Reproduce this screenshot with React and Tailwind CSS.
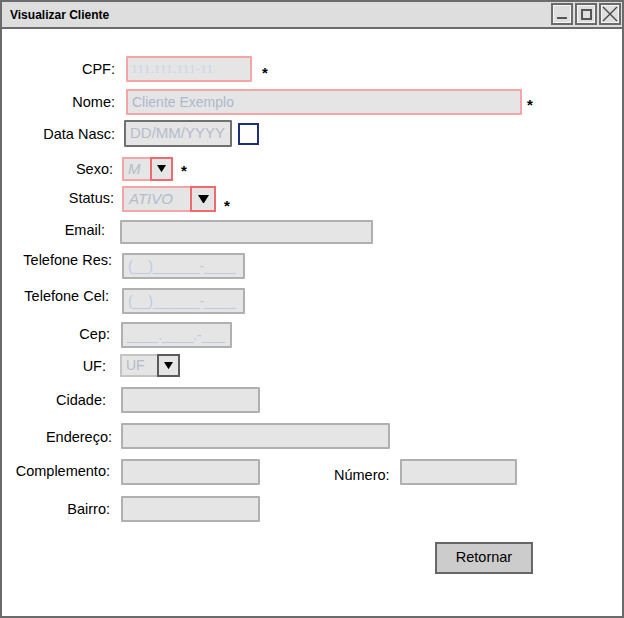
import React from "react";

const Tri = ({ size = 9 }) => (
  <svg width={size} height={size * 0.8} viewBox="0 0 10 8">
    <polygon points="0,0 10,0 5,8" fill="#000" />
  </svg>
);

const Star = ({ cls = "" }) => (
  <span className={"text-[15px] font-bold text-black leading-none " + cls}>*</span>
);

const Ctrl = ({ children }) => (
  <div className="w-[22px] h-[22px] border-2 border-[#6b6b6b] bg-[#dedede] flex items-center justify-center">
    <div className="w-[18px] h-[18px] border border-[#f4f4f4] flex items-center justify-center relative">
      {children}
    </div>
  </div>
);

export default function App() {
  const lbl = "shrink-0 text-right text-[14.5px] text-black leading-[16px]";
  const inp = "shrink-0 bg-[#e5e5e5] border-2 rounded-[1px]";
  return (
    <div className="w-[624px] h-[618px] border-2 border-[#6b6b6b] bg-white flex flex-col [font-family:'Liberation_Sans',Arial,sans-serif] overflow-hidden">
      <div className="h-[27px] shrink-0 bg-[#dedede] border-b-2 border-[#6b6b6b] flex items-center justify-between pl-[8px] pr-[1px]">
        <span className="text-[12px] font-bold text-black">Visualizar Cliente</span>
        <div className="flex gap-[2px] -mt-[1px]">
          <Ctrl>
            <div className="absolute bottom-[3px] left-[3px] w-[10px] h-[2px] bg-[#555]" />
          </Ctrl>
          <Ctrl>
            <div className="w-[11px] h-[11px] border-2 border-[#555]" />
          </Ctrl>
          <Ctrl>
            <svg width="16" height="16" viewBox="0 0 16 16">
              <path d="M1 1 L15 15 M15 1 L1 15" stroke="#444" strokeWidth="1.3" />
            </svg>
          </Ctrl>
        </div>
      </div>

      <div className="flex flex-col pt-[27px]">
        {/* CPF */}
        <div className="flex items-center h-[26px]">
          <span className={lbl + " w-[113px]"}>CPF:</span>
          <div className={inp + " ml-[11px] w-[126px] h-[26px] border-[#f5a5a5] flex items-center pl-[3px]"}>
            <span className="text-[13.5px] text-[#cad7ea] [font-family:'Liberation_Serif',serif]">111.111.111-11</span>
          </div>
          <Star cls="ml-[10px] mt-[6px]" />
        </div>

        {/* Nome */}
        <div className="flex items-center h-[26px] mt-[7px]">
          <span className={lbl + " w-[113px]"}>Nome:</span>
          <div className={inp + " ml-[11px] w-[396px] h-[26px] border-[#f5a5a5] flex items-center pl-[4px]"}>
            <span className="text-[14px] text-[#aeb8cc]">Cliente Exemplo</span>
          </div>
          <Star cls="ml-[5px] mt-[4px]" />
        </div>

        {/* Data Nasc */}
        <div className="flex items-center h-[27px] mt-[5px]">
          <span className={lbl + " w-[113px]"}>Data Nasc:</span>
          <div className={inp + " ml-[9px] w-[108px] h-[27px] border-[#707070] flex items-center pl-[4px] overflow-hidden"}>
            <span className="text-[15px] text-[#b4bccc] whitespace-nowrap">DD/MM/YYYY</span>
          </div>
          <div className="ml-[6px] w-[21px] h-[22px] border-2 border-[#1e3178]" />
        </div>

        {/* Sexo */}
        <div className="flex items-center h-[24px] mt-[10px]">
          <span className={lbl + " w-[111px]"}>Sexo:</span>
          <div className="ml-[9px] w-[51px] h-[24px] flex shrink-0">
            <div className="flex-1 bg-[#e5e5e5] border-2 border-r-0 border-[#f5a5a5] flex items-center pl-[4px]">
              <span className="text-[15px] italic text-[#b4bccc]">M</span>
            </div>
            <div className="w-[23px] bg-[#e5e5e5] border-2 border-[#ee6b6b] flex items-center justify-center">
              <Tri size={9} />
            </div>
          </div>
          <Star cls="ml-[8px] mt-[2px]" />
        </div>

        {/* Status */}
        <div className="flex items-center h-[26px] mt-[5px]">
          <span className={lbl + " w-[112px] mb-[3px]"}>Status:</span>
          <div className="ml-[8px] w-[94px] h-[26px] flex shrink-0">
            <div className="flex-1 bg-[#e5e5e5] border-2 border-r-0 border-[#f5a5a5] flex items-center pl-[5px]">
              <span className="text-[15px] italic text-[#b4bccc]">ATIVO</span>
            </div>
            <div className="w-[26px] bg-[#e5e5e5] border-2 border-[#ee6b6b] flex items-center justify-center">
              <Tri size={11} />
            </div>
          </div>
          <Star cls="ml-[8px] mt-[12px]" />
        </div>

        {/* Email */}
        <div className="flex items-center h-[24px] mt-[8px]">
          <span className={lbl + " w-[103px] mb-[4px]"}>Email:</span>
          <div className={inp + " ml-[15px] w-[253px] h-[24px] border-[#b0b0b0]"} />
        </div>

        {/* Telefone Res */}
        <div className="flex items-center h-[26px] mt-[9px]">
          <span className={lbl + " w-[110px] mb-[12px]"}>Telefone Res:</span>
          <div className={inp + " ml-[10px] w-[123px] h-[26px] border-[#b0b0b0] flex items-center pl-[4px] overflow-hidden"}>
            <span className="text-[14px] text-[#bccbe2] whitespace-nowrap">(__)______-____</span>
          </div>
        </div>

        {/* Telefone Cel */}
        <div className="flex items-center h-[26px] mt-[9px]">
          <span className={lbl + " w-[107px] mb-[10px]"}>Telefone Cel:</span>
          <div className={inp + " ml-[13px] w-[123px] h-[26px] border-[#b0b0b0] flex items-center pl-[4px] overflow-hidden"}>
            <span className="text-[14px] text-[#bccbe2] whitespace-nowrap">(__)______-____</span>
          </div>
        </div>

        {/* Cep */}
        <div className="flex items-center h-[26px] mt-[8px]">
          <span className={lbl + " w-[108px] mb-[3px]"}>Cep:</span>
          <div className={inp + " ml-[11px] w-[111px] h-[26px] border-[#b0b0b0] flex items-center pl-[4px] overflow-hidden"}>
            <span className="text-[14px] text-[#bccbe2] whitespace-nowrap">____.____.-___</span>
          </div>
        </div>

        {/* UF */}
        <div className="flex items-center h-[23px] mt-[6px]">
          <span className={lbl + " w-[104px]"}>UF:</span>
          <div className="ml-[14px] w-[60px] h-[23px] flex shrink-0">
            <div className="flex-1 bg-[#e5e5e5] border-2 border-r-0 border-[#c4c4c4] flex items-center pl-[4px]">
              <span className="text-[14px] text-[#b4bccc]">UF</span>
            </div>
            <div className="w-[23px] bg-[#e5e5e5] border-2 border-[#5a5a5a] flex items-center justify-center">
              <Tri size={9} />
            </div>
          </div>
        </div>

        {/* Cidade */}
        <div className="flex items-center h-[26px] mt-[10px]">
          <span className={lbl + " w-[104px]"}>Cidade:</span>
          <div className={inp + " ml-[15px] w-[139px] h-[26px] border-[#b0b0b0]"} />
        </div>

        {/* Endereco */}
        <div className="flex items-center h-[26px] mt-[10px]">
          <span className={lbl + " w-[110px] mt-[2px]"}>Endereço:</span>
          <div className={inp + " ml-[9px] w-[269px] h-[26px] border-[#b0b0b0]"} />
        </div>

        {/* Complemento / Numero */}
        <div className="flex items-center h-[26px] mt-[10px]">
          <span className={lbl + " w-[108px] mb-[3px]"}>Complemento:</span>
          <div className={inp + " ml-[11px] w-[139px] h-[26px] border-[#b0b0b0]"} />
          <span className={lbl + " ml-[74px] mt-[6px]"}>Número:</span>
          <div className={inp + " ml-[10px] w-[117px] h-[26px] border-[#b0b0b0]"} />
        </div>

        {/* Bairro */}
        <div className="flex items-center h-[26px] mt-[11px]">
          <span className={lbl + " w-[108px]"}>Bairro:</span>
          <div className={inp + " ml-[11px] w-[139px] h-[26px] border-[#b0b0b0]"} />
        </div>

        {/* Retornar */}
        <div className="flex mt-[20px]">
          <button className="ml-[433px] w-[98px] h-[32px] bg-[#cccccc] border-2 border-[#666] text-[14.5px] text-black flex items-center justify-center">
            Retornar
          </button>
        </div>
      </div>
    </div>
  );
}
